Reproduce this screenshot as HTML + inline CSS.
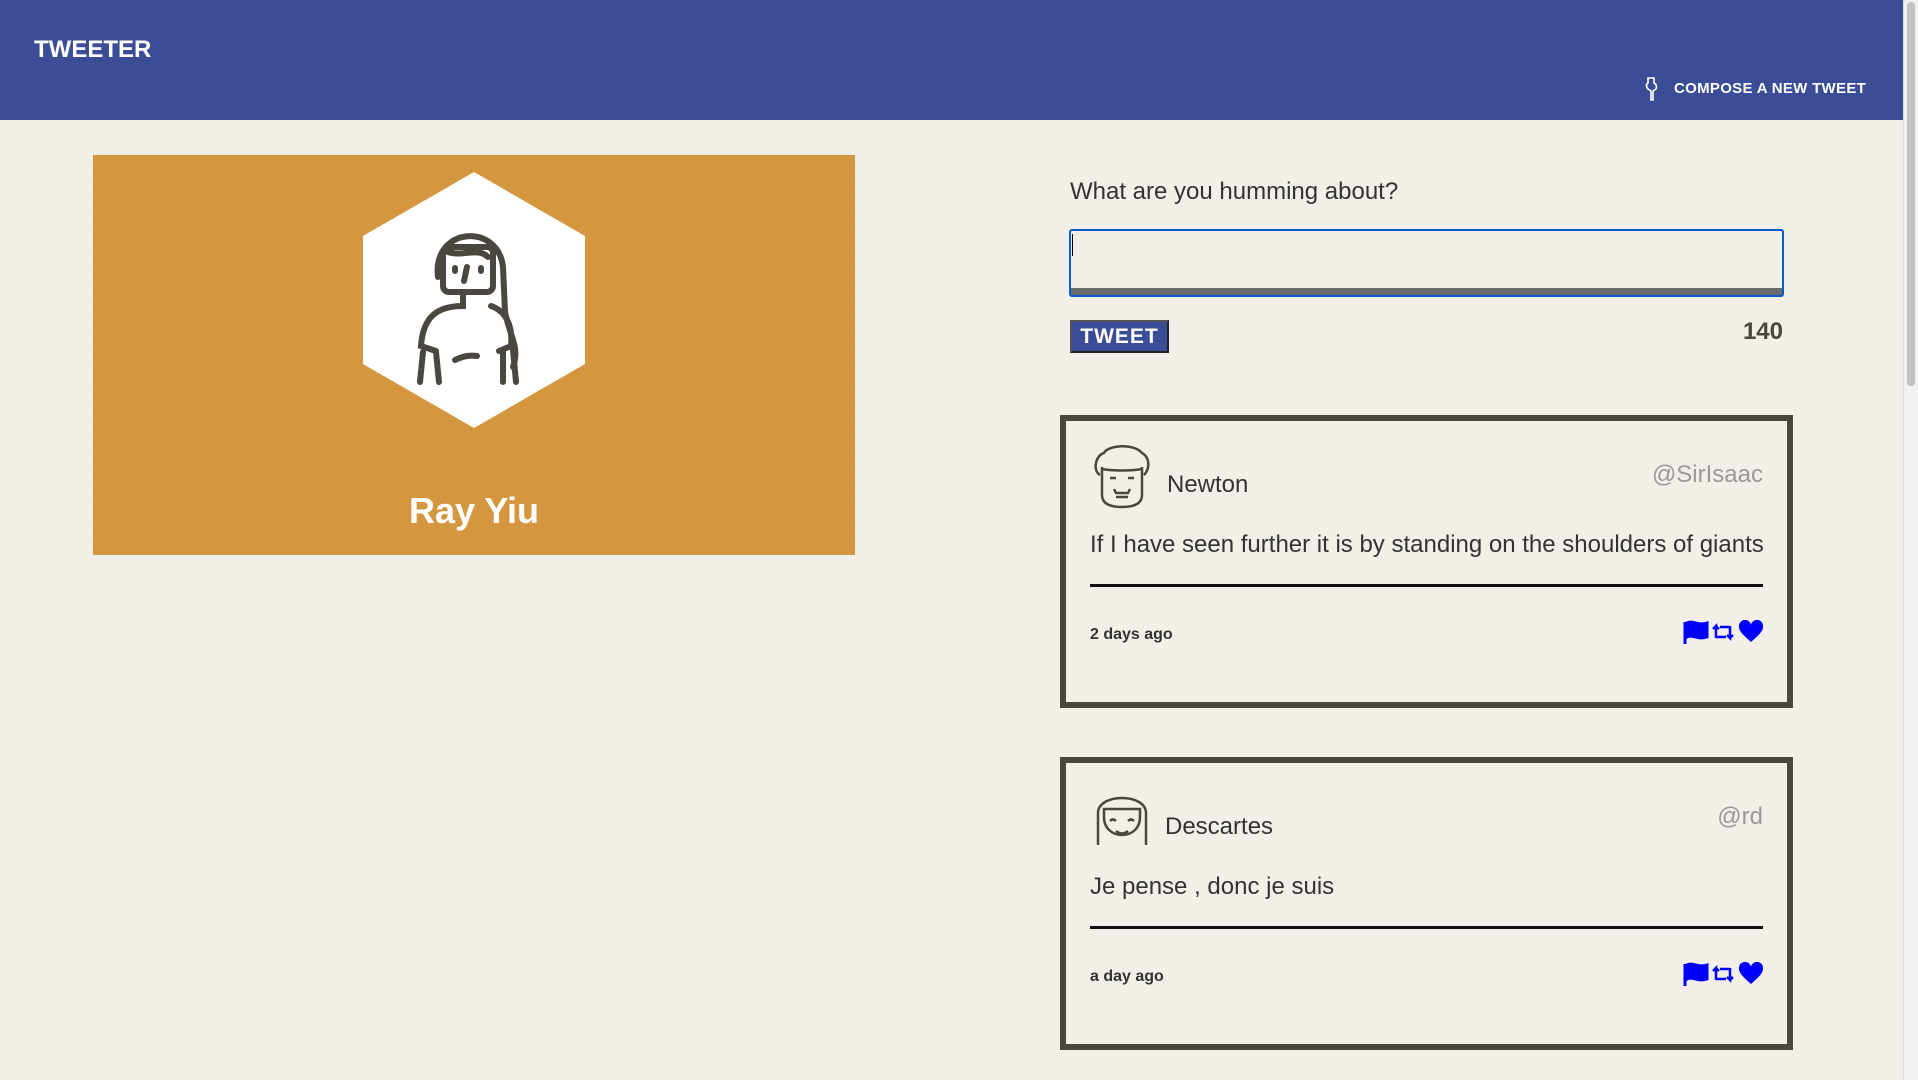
<!DOCTYPE html>
<html><head><meta charset="utf-8"><style>
html,body{margin:0;padding:0;}
body{width:1918px;height:1080px;background:#f2efe9;font-family:"Liberation Sans",sans-serif;position:relative;overflow:hidden;color:#4a4740;}
.hdr{position:absolute;left:0;top:0;width:1903px;height:120px;background:#3a4d96;}
.logo{position:absolute;left:34px;top:36px;color:#fff;font-weight:900;font-size:24px;}
.comp{position:absolute;left:1674px;top:80px;color:#fff;font-weight:900;font-size:15px;letter-spacing:0.3px;}
.scroll{position:absolute;left:1903px;top:0;width:15px;height:1080px;background:#f1f1f1;border-left:1px solid #ddd;}
.thumb{position:absolute;left:1907px;top:2px;width:8px;height:384px;background:#c1c1c1;border-radius:4px;}
.prof{position:absolute;left:93px;top:155px;width:762px;height:400px;background:#d4963e;
background-image:repeating-linear-gradient(0deg,rgba(255,255,255,0.04) 0 1px,transparent 1px 17px),repeating-linear-gradient(90deg,rgba(120,70,10,0.04) 0 1px,transparent 1px 44px);}
.name{position:absolute;left:0;width:762px;top:335px;text-align:center;color:#fff;font-weight:bold;font-size:36px;}
.q{position:absolute;left:1070px;top:178px;font-size:24px;color:#333;}
.ta{position:absolute;left:1069px;top:229px;width:711px;height:58px;border:2px solid #0a5ac8;border-bottom:none;border-radius:3px 3px 0 0;background:#f2efe9;}
.tab{position:absolute;left:1069px;top:288px;width:715px;height:9px;background:#6c6c6c;border-bottom:2px solid #0a5ac8;box-sizing:border-box;border-left:2px solid #0a5ac8;border-right:2px solid #0a5ac8;border-radius:0 0 3px 3px;}
.caret{position:absolute;left:1072px;top:234px;width:1px;height:22px;background:#000;}
.btn{position:absolute;left:1070px;top:320px;width:99px;height:33px;background:#3a4d96;border:2px solid #222;border-top-color:#555;border-left-color:#555;box-sizing:border-box;color:#fff;font-weight:900;font-size:21px;text-align:center;line-height:29px;letter-spacing:1px;}
.cnt{position:absolute;left:1700px;width:83px;top:318px;text-align:right;font-weight:900;font-size:24px;color:#4a4740;}
.card{position:absolute;left:1060px;width:733px;height:293px;border:6px solid #4a4740;box-sizing:border-box;}
.av{position:absolute;left:26px;top:24px;}
.nm{position:absolute;font-size:24px;color:#333;top:50px;}
.hd{position:absolute;right:24px;top:40px;font-size:24px;color:#999;}
.tx{position:absolute;left:24px;top:110px;font-size:24px;color:#333;}
.ln{position:absolute;left:24px;right:24px;top:163px;height:3px;background:#111;}
.dt{position:absolute;left:24px;top:205px;font-size:16px;font-weight:bold;color:#333;}
.ic{position:absolute;right:24px;top:199px;}
</style></head><body>
<div class="hdr">
<div class="logo">TWEETER</div>
<svg style="position:absolute;left:1644px;top:76px" width="14" height="26" viewBox="0 0 14 26"><path d="M4 2h6v5c2 1 3 3 2 6l-3 2v9H7v-9l-3-2C2 11 2 8 4 7z" fill="none" stroke="#fff" stroke-width="1.6"/></svg>
<div class="comp">COMPOSE A NEW TWEET</div>
</div>
<div class="scroll"></div><div class="thumb"></div>
<div class="prof">
<svg style="position:absolute;left:270px;top:17px" width="222" height="256" viewBox="0 0 222 256">
<polygon points="111,0 222,64 222,192 111,256 0,192 0,64" fill="#fff"/>
<g fill="none" stroke="#4a4740" stroke-width="6" stroke-linecap="round">
<path d="M75 105c-6-50 60-55 65-10l2 45c5 25 15 35 8 55"/>
<rect x="80" y="75" width="50" height="45" rx="6"/>
<path d="M85 80c15 5 30-5 40 5"/>
<path d="M104 95l-3 14M92 96v3M118 96v3"/>
<path d="M100 122v12c-25 0-40 10-42 40l15 5M128 134c15 5 22 20 20 40l-12 5"/>
<path d="M60 180l-3 30M73 180l3 30M140 180v30M150 178l3 32M92 188c8-4 16-5 22-4"/>
</g></svg>
<div class="name">Ray Yiu</div>
</div>
<div class="q">What are you humming about?</div>
<div class="ta"></div><div class="tab"></div><div class="caret"></div>
<div class="btn">TWEET</div>
<div class="cnt">140</div>

<div class="card" style="top:415px">
<svg class="av" width="60" height="64" viewBox="0 0 60 64"><g fill="none" stroke="#4a4740" stroke-width="2.5"><path d="M8 30c-8-5-4-20 4-22 4-8 30-10 38 0 8 4 8 16 2 22"/><path d="M10 22v28c0 10 10 12 20 12s20-2 20-12V22"/><path d="M10 24c10 2 30 2 40 0"/><path d="M18 33h6M36 33h6M22 44l2 4h12l2-4M24 52h12"/></g></svg>
<div class="nm" style="left:101px">Newton</div>
<div class="hd">@SirIsaac</div>
<div class="tx">If I have seen further it is by standing on the shoulders of giants</div>
<div class="ln"></div>
<div class="dt">2 days ago</div>
<svg class="ic" width="80" height="24" viewBox="0 0 80 24"><path d="M2 2v22M4 3c6-3 10 3 20 0v14c-10 3-14-3-20 0z" stroke="#00f" stroke-width="3" fill="#00f"/><path d="M33 18V6l-3 3M33 6l3 3M33 17h10M47 6v12l-3-3M47 18l3-3M47 7h-10" stroke="#00f" stroke-width="2.5" fill="none"/><path d="M68 22C60 15 56 11 56 7a6 6 0 0 1 12-2 6 6 0 0 1 12 2c0 4-4 8-12 15z" fill="#00f"/></svg>
</div>

<div class="card" style="top:757px">
<svg class="av" width="60" height="64" viewBox="0 0 60 64"><g fill="none" stroke="#4a4740" stroke-width="2.5"><path d="M6 58V26C6 6 54 6 54 26v32"/><path d="M12 30c0 24 36 24 36 0V22H12z"/><path d="M18 34q3-3 6 0M36 34q3-3 6 0M24 44q6 5 12 0"/></g></svg>
<div class="nm" style="left:99px">Descartes</div>
<div class="hd">@rd</div>
<div class="tx">Je pense , donc je suis</div>
<div class="ln"></div>
<div class="dt">a day ago</div>
<svg class="ic" width="80" height="24" viewBox="0 0 80 24"><path d="M2 2v22M4 3c6-3 10 3 20 0v14c-10 3-14-3-20 0z" stroke="#00f" stroke-width="3" fill="#00f"/><path d="M33 18V6l-3 3M33 6l3 3M33 17h10M47 6v12l-3-3M47 18l3-3M47 7h-10" stroke="#00f" stroke-width="2.5" fill="none"/><path d="M68 22C60 15 56 11 56 7a6 6 0 0 1 12-2 6 6 0 0 1 12 2c0 4-4 8-12 15z" fill="#00f"/></svg>
</div>
</body></html>
